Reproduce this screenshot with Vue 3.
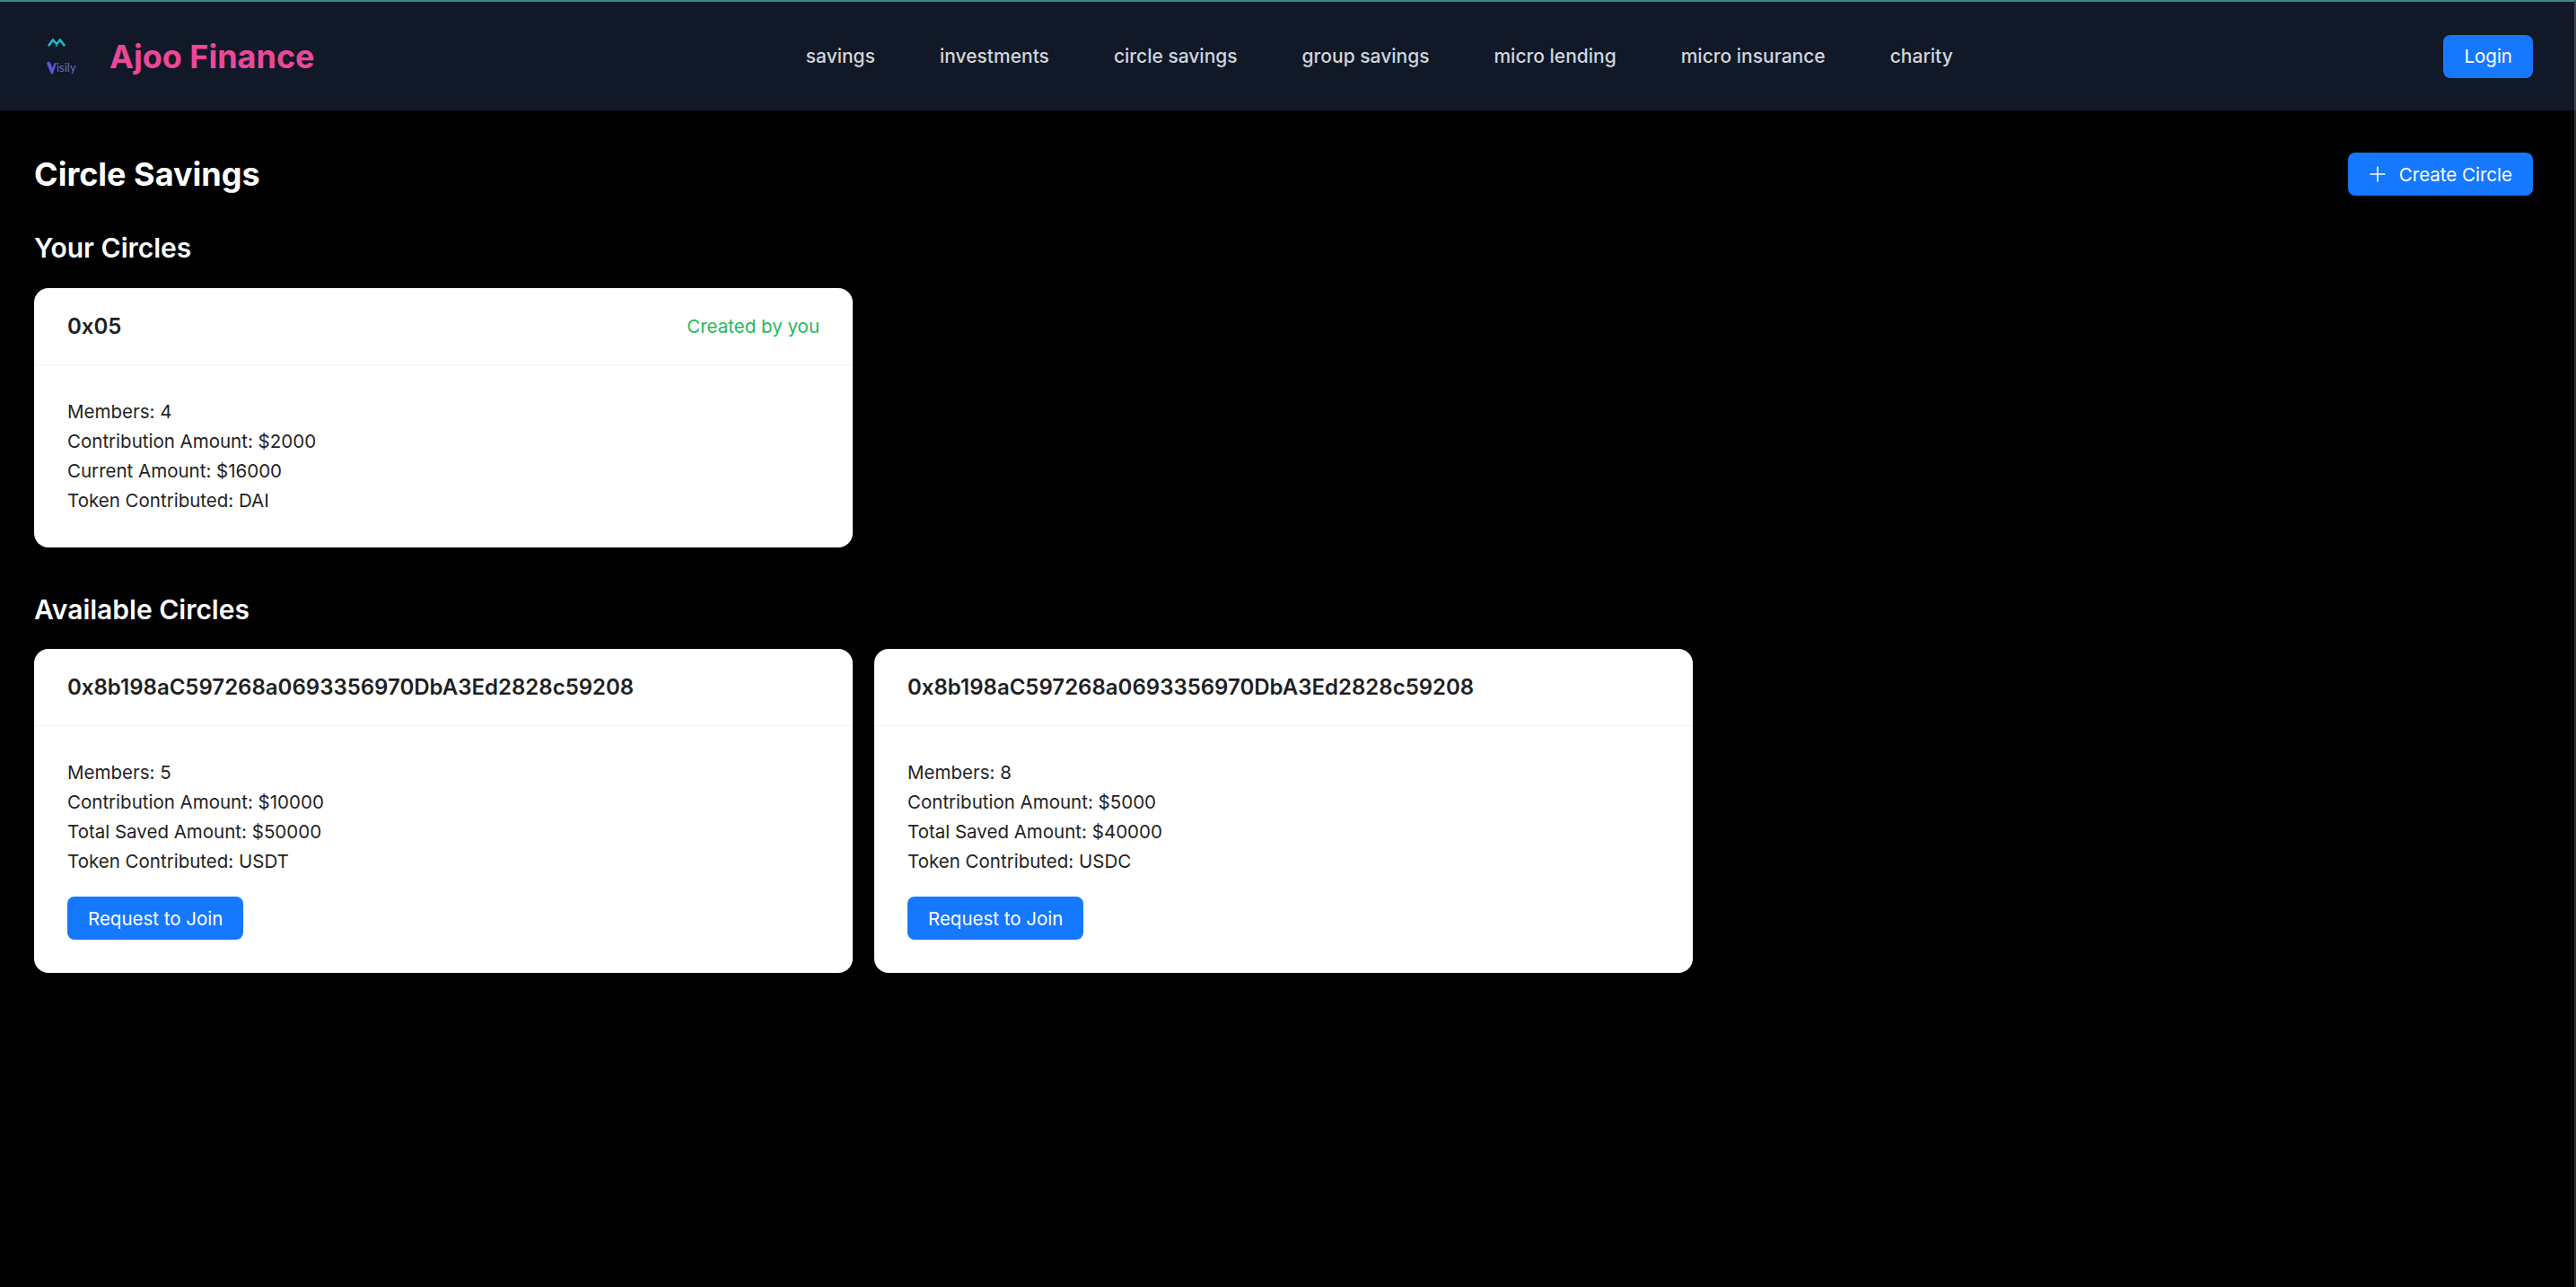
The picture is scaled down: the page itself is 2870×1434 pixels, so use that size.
<template>
  <div class="page">
    <header class="topbar">
      <div class="brand">
        <div class="logo">
          <svg class="logo-roof" width="20" height="10" viewBox="0 0 20 10">
            <path d="M1 9.2 L6 2.5 L10 7 L14 2.5 L19 9.2" fill="none" stroke="#22b8c4" stroke-width="2.6" />
            <path d="M8.4 9.8 L10 7.8 L11.6 9.8 Z" fill="#22b8c4" />
          </svg>
          <div class="logo-word">
            <svg width="11" height="15" viewBox="0 0 11 15">
              <path d="M0 2.6 Q1.6 -0.6 4 2 L6.3 7.4 L9.2 2 L11 2 L6.8 14.5 L5 14.5 Z" fill="#5a55d6" />
            </svg>
            <span>isily</span>
          </div>
        </div>
        <span class="brand-name">Ajoo Finance</span>
      </div>
      <nav class="nav">
        <a v-for="item in navItems" :key="item" class="nav-link">{{ item }}</a>
      </nav>
      <button class="btn">Login</button>
    </header>

    <main class="content">
      <div class="title-row">
        <h1>Circle Savings</h1>
        <button class="btn btn-icon">
          <svg width="20" height="20" viewBox="0 0 20 20">
            <path d="M10 1.5 V18.5 M1.5 10 H18.5" stroke="#fff" stroke-width="1.6" fill="none" />
          </svg>
          Create Circle
        </button>
      </div>

      <h2>Your Circles</h2>
      <div class="card-grid">
        <div class="card">
          <div class="card-head">
            <span class="card-title">0x05</span>
            <span class="created">Created by you</span>
          </div>
          <div class="card-body">
            <p>Members: 4</p>
            <p>Contribution Amount: $2000</p>
            <p>Current Amount: $16000</p>
            <p>Token Contributed: DAI</p>
          </div>
        </div>
      </div>

      <h2 class="second">Available Circles</h2>
      <div class="card-grid">
        <div v-for="circle in circles" :key="circle.token" class="card">
          <div class="card-head">
            <span class="card-title">0x8b198aC597268a0693356970DbA3Ed2828c59208</span>
          </div>
          <div class="card-body">
            <p>Members: {{ circle.members }}</p>
            <p>Contribution Amount: ${{ circle.amount }}</p>
            <p>Total Saved Amount: ${{ circle.saved }}</p>
            <p>Token Contributed: {{ circle.token }}</p>
            <button class="btn join">Request to Join</button>
          </div>
        </div>
      </div>
    </main>
  </div>
</template>

<script setup>
const navItems = [
  'savings',
  'investments',
  'circle savings',
  'group savings',
  'micro lending',
  'micro insurance',
  'charity'
];

const circles = [
  { members: 5, amount: 10000, saved: 50000, token: 'USDT' },
  { members: 8, amount: 5000, saved: 40000, token: 'USDC' }
];
</script>

<style>
html,
body {
  margin: 0;
  background: #000;
}
</style>

<style scoped>
.page {
  box-sizing: border-box;
  min-height: 1434px;
  background: #000;
  border-right: 2px solid #2f2f2f;
  font-family: Inter, "Liberation Sans", sans-serif;
  color: #fff;
}

.topbar {
  display: flex;
  align-items: center;
  justify-content: space-between;
  height: 121px;
  margin-right: -2px;
  padding: 0 46px 0 38px;
  background: #111827;
  border-top: 2px solid #3a8a86;
  border-right: 2px solid #3d4250;
}

.brand {
  display: flex;
  align-items: center;
  width: 312px;
  white-space: nowrap;
}

.logo {
  display: flex;
  flex: none;
  flex-direction: column;
  align-items: flex-start;
  gap: 16px;
  width: 84px;
  padding-left: 14px;
  box-sizing: border-box;
}

.logo-roof {
  display: block;
  margin-left: 1px;
}

.logo-word {
  display: flex;
  align-items: center;
  font-family: Lato, sans-serif;
  font-size: 13px;
  line-height: 15px;
  color: #5f73c9;
}

.brand-name {
  font-size: 36px;
  font-weight: 700;
  color: #ec4899;
}

.nav {
  display: flex;
  gap: 72px;
  margin-left: 1px;
}

.nav-link {
  font-size: 21px;
  font-weight: 500;
  color: #d1d5db;
}

.btn {
  display: inline-flex;
  align-items: center;
  justify-content: center;
  height: 48px;
  padding: 0 23px;
  border: none;
  border-radius: 8px;
  background: #1677ff;
  color: #fff;
  font-family: inherit;
  font-size: 20.5px;
  font-weight: 400;
}

.btn-icon {
  gap: 14px;
}

.content {
  padding: 47px 46px 0 38px;
}

.title-row {
  display: flex;
  align-items: center;
  justify-content: space-between;
}

h1 {
  margin: 0;
  font-size: 36px;
  font-weight: 700;
  line-height: 48px;
}

h2 {
  margin: 40px 0 27px;
  font-size: 30px;
  font-weight: 600;
  line-height: 36px;
}

h2.second {
  margin-top: 51px;
  margin-bottom: 26px;
}

.card-grid {
  display: grid;
  grid-template-columns: repeat(3, 1fr);
  gap: 24px;
}

.card {
  border-radius: 16px;
  background: #fff;
  color: #1f1f1f;
}

.card-head {
  display: flex;
  align-items: center;
  justify-content: space-between;
  height: 85px;
  padding: 0 37px;
  border-bottom: 1px solid #f0f0f0;
}

.card-title {
  font-size: 24px;
  font-weight: 600;
}

.created {
  font-size: 20.5px;
  color: #27b860;
}

.card-body {
  padding: 35px 37px 36px;
}

.card-body p {
  margin: 0;
  font-size: 20.5px;
  line-height: 33px;
}

.join {
  display: flex;
  margin: 23px 0 1px;
}
</style>
